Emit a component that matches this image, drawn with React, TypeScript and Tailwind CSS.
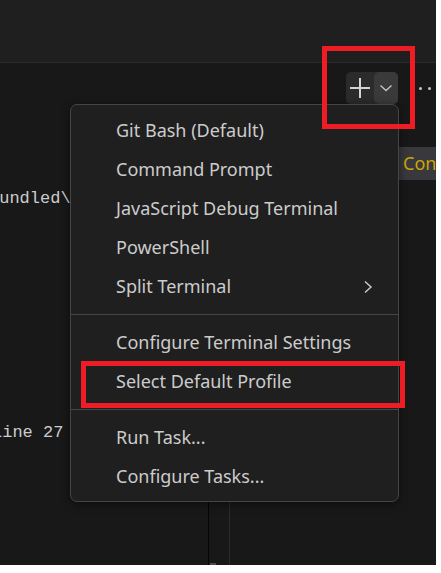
import React from "react";

const Sep = () => (
  <div className="h-[17px] flex items-center">
    <div className="h-px w-full bg-[#454545]" />
  </div>
);

const Item = ({ label, sub }: { label: string; sub?: boolean }) => (
  <div className="h-[39px] flex items-center pl-[45px] pr-[24px] text-[#cccccc]">
    <span className="flex-1">{label}</span>
    {sub && (
      <svg width="12" height="14" viewBox="0 0 12 14">
        <path d="M3 1.5 L9 7 L3 12.5" stroke="#cccccc" strokeWidth="1.4" fill="none" />
      </svg>
    )}
  </div>
);

export default function App() {
  return (
    <div className="w-[436px] h-[565px] flex flex-col overflow-hidden relative" style={{ fontFamily: '"Noto Sans", "Open Sans", sans-serif' }}>
      <div className="h-[63px] bg-[#1f1f1f] border-b border-[#2b2b2b] shrink-0" />
      <div className="flex-1 bg-[#181818] relative">
        {/* toolbar */}
        <div className="flex items-center justify-end h-[32px] mt-[9px] gap-[21px]">
          <div className="flex h-[32px] rounded-[5px] bg-[#2b2b2b]">
            <div className="w-[28px] flex items-center justify-center">
              <svg width="22" height="22" viewBox="0 0 22 22">
                <path d="M11 1 V21 M1 11 H21" stroke="#d4d4d4" strokeWidth="2" />
              </svg>
            </div>
            <div className="w-[24px] flex items-center justify-center rounded-[5px] bg-[#3a3a3a]">
              <svg width="14" height="10" viewBox="0 0 14 10">
                <path d="M1.5 2.5 L7 7.5 L12.5 2.5" stroke="#c5c5c5" strokeWidth="1.3" fill="none" />
              </svg>
            </div>
          </div>
          <div className="flex gap-[6px] w-[18px] mr-[-1px] items-center">
            <div className="w-[3px] h-[3px] rounded-full bg-[#c5c5c5] shrink-0" />
            <div className="w-[3px] h-[3px] rounded-full bg-[#c5c5c5] shrink-0" />
            <div className="w-[3px] h-[3px] rounded-full bg-[#c5c5c5] shrink-0" />
          </div>
        </div>

        {/* terminal text */}
        <div
          className="text-[17px] text-[#cccccc] leading-[20px]"
          style={{ fontFamily: '"Liberation Mono", monospace' }}
        >
          <div className="ml-[-11px] mt-[85px] whitespace-nowrap">bundled\test-runner\index.js</div>
          <div className="ml-[-8px] mt-[214px] whitespace-nowrap">line 27</div>
        </div>

        {/* vertical lines below menu */}
        <div className="absolute left-[208px] top-[300px] bottom-0 w-px bg-[#050505]" />
        <div className="absolute left-[229px] top-[300px] bottom-0 w-px bg-[#2b2b2b]" />
        <div className="absolute left-[210px] bottom-0 w-[6px] h-[2px] bg-[#4a4a4a]" />

        {/* Con box */}
        <div className="absolute left-[398px] top-[84px] w-[40px] h-[33px] bg-[#38383d] flex items-center pl-[5px] text-[18px] text-[#cca700] whitespace-nowrap overflow-hidden">
          Configure
        </div>

        {/* menu */}
        <div className="absolute left-[70px] top-[41px] w-[329px] rounded-[7px] border border-[#454545] bg-[#1f1f1f] pt-[6px] pb-[5px] text-[18px] shadow-[0_2px_8px_rgba(0,0,0,0.5)]">
          <Item label="Git Bash (Default)" />
          <Item label="Command Prompt" />
          <Item label="JavaScript Debug Terminal" />
          <Item label="PowerShell" />
          <Item label="Split Terminal" sub />
          <Sep />
          <Item label="Configure Terminal Settings" />
          <Item label="Select Default Profile" />
          <Sep />
          <Item label="Run Task..." />
          <Item label="Configure Tasks..." />
        </div>

        {/* annotations */}
        <div className="absolute left-[322px] top-[-17px] w-[93px] h-[83px] border-[5px] border-[#ee1c25]" />
        <div className="absolute left-[81px] top-[298px] w-[324px] h-[47px] border-[5px] border-[#ee1c25]" />
      </div>
    </div>
  );
}
